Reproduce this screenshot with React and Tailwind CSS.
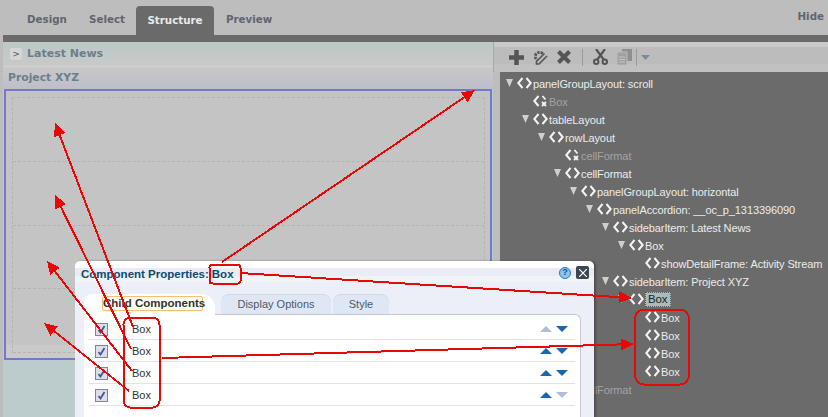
const tree = [
  { level: 0, label: "panelGroupLayout: scroll", open: true },
  { level: 1, label: "Box", off: true },
  { level: 1, label: "tableLayout", open: true },
  { level: 2, label: "rowLayout", open: true },
  { level: 3, label: "cellFormat", off: true },
  { level: 3, label: "cellFormat", open: true },
  { level: 4, label: "panelGroupLayout: horizontal", open: true },
  { level: 5, label: "panelAccordion: __oc_p_1313396090", open: true },
  { level: 6, label: "sidebarItem: Latest News", open: true },
  { level: 7, label: "Box", open: true },
  { level: 8, label: "showDetailFrame: Activity Stream" },
  { level: 6, label: "sidebarItem: Project XYZ", open: true },
  { level: 7, label: "Box", open: true, selected: true },
  { level: 8, label: "Box" },
  { level: 8, label: "Box" },
  { level: 8, label: "Box" },
  { level: 8, label: "Box" },
  { level: 3, label: "cellFormat", off: true },
];

function CodeIcon({ off }) {
  return (
    <svg width="15" height="12" viewBox="0 0 15 12" className="shrink-0 -mt-[2px]">
      <path d="M5.500 1 1.300 6l4.200 5" fill="none" stroke="#f4f4f4" strokeWidth="2" />
      {off ? (
        <path d="M9 7l4 4M13 7l-4 4M9.500 1l3 3.500" fill="none" stroke="#f4f4f4" strokeWidth="1.800" />
      ) : (
        <path d="M9.500 1l4.200 5-4.200 5" fill="none" stroke="#f4f4f4" strokeWidth="2" />
      )}
    </svg>
  );
}

function TreeRow({ item }) {
  const left = 6 + item.level * 16;
  return (
    <div className="flex h-[18px] items-center" style={{ paddingLeft: left }}>
      <span className="flex w-[11px] shrink-0 items-center">
        {item.open && (
          <svg width="7" height="8" viewBox="0 0 7 8" className="-mt-[2px]">
            <path d="M0 0h7L3.500 8z" fill="#cfcfcf" />
          </svg>
        )}
      </span>
      <CodeIcon off={item.off} />
      {item.selected ? (
        <span className="-mt-[1px] ml-[1px] border border-dotted border-[#556] bg-[#a9bcbc] px-[2px] text-[11.500px] leading-[13px] text-[#222]">{item.label}</span>
      ) : (
        <span className={item.off ? "ml-[1px] whitespace-nowrap text-[#a3a3a3]" : "ml-[1px] whitespace-nowrap text-[#ececec]"}>{item.label}</span>
      )}
    </div>
  );
}

function Toolbar() {
  return (
    <div className="flex h-[30px] items-center border-l border-[#a8a8a8] bg-[linear-gradient(#c9c9c9_0_5px,#bcbcbc_5px_22px,#c1c1c1_22px)] pl-[15px]">
      <svg width="15" height="15" viewBox="0 0 15 15"><path d="M7.500 0v15M0 7.500h15" stroke="#555" strokeWidth="4.500" /></svg>
      <svg className="ml-[9px]" width="15" height="15" viewBox="0 0 15 15">
        <circle cx="6.500" cy="6.500" r="4.200" fill="none" stroke="#555" strokeWidth="2.800" strokeDasharray="2.400 1" />
        <path d="M14 6 6 14H3.500v-2.500L11.500 3.500" fill="#bcbcbc" stroke="#555" strokeWidth="1.600" />
      </svg>
      <svg className="ml-[9px]" width="14" height="14" viewBox="0 0 14 14"><path d="M1.500 1.500l11 11M12.500 1.500l-11 11" stroke="#555" strokeWidth="4" /></svg>
      <span className="ml-[11px] h-[17px] w-px bg-[#9a9a9a]" />
      <svg className="ml-[10px]" width="15" height="16" viewBox="0 0 15 16">
        <path d="M3 0l8 11M12 0 4 11" stroke="#555" strokeWidth="2.200" />
        <circle cx="3.200" cy="12.800" r="2.200" fill="none" stroke="#555" strokeWidth="2" />
        <circle cx="11.800" cy="12.800" r="2.200" fill="none" stroke="#555" strokeWidth="2" />
      </svg>
      <svg className="ml-[9px]" width="15" height="16" viewBox="0 0 15 16">
        <path d="M5 0h10v12H5z" fill="#8f8f8f" />
        <path d="M0 3h10v13H0z" fill="#a0a0a0" stroke="#bdbdbd" />
        <path d="M2 8h6M2 10.500h6M2 13h6" stroke="#c5c5c5" />
      </svg>
      <span className="ml-[4px] h-[17px] w-px bg-[#9a9a9a]" />
      <svg className="ml-[4px]" width="9" height="5" viewBox="0 0 9 5"><path d="M0 0h9L4.500 5z" fill="#7d8a9c" /></svg>
    </div>
  );
}

function Check() {
  return (
    <span className="flex h-[13px] w-[13px] items-center justify-center border border-[#85858f] bg-[#dcdee8]">
      <svg width="9" height="9" viewBox="0 0 9 9"><path d="M1.500 5l2 2.500L7.500 1" fill="none" stroke="#43569c" strokeWidth="1.800" /></svg>
    </span>
  );
}

function Move({ up, down }) {
  return (
    <div className="flex gap-[4px]">
      <svg width="12" height="6" viewBox="0 0 12 6"><path d="M0 6 6 0l6 6z" fill={up ? "#1a66b0" : "#b0bdd4"} /></svg>
      <svg width="12" height="6" viewBox="0 0 12 6"><path d="M0 0h12L6 6z" fill={down ? "#1a66b0" : "#b0bdd4"} /></svg>
    </div>
  );
}

function Dialog() {
  const rows = [[false, true], [true, true], [true, true], [true, false]];
  return (
    <div className="absolute left-[75px] top-[261px] h-[170px] w-[519px] rounded-t-[5px] bg-white shadow-[2px_0_2px_rgba(60,60,60,0.6)]">
      <div className="mt-[7px] flex h-[14px] items-center bg-[linear-gradient(#e9ebf5_0_8px,#eff5f5_8px)] pl-[6px] text-[11.500px] font-bold text-[#0f4a70]">
        Component Properties: <span className="ml-[3px]">Box</span>
        <span className="-mt-[5px] ml-auto mr-[5px] flex items-center gap-[5px]">
          <span className="flex h-[12px] w-[12px] items-center justify-center rounded-full border border-[#2a78c0] bg-[#8fc4ee] text-[9px] leading-none text-[#14508e]">?</span>
          <span className="flex h-[13px] w-[13px] items-center justify-center rounded-[2px] bg-[#3d4754]">
            <svg width="8" height="8" viewBox="0 0 8 8"><path d="M0 0l8 8M8 0 0 8" stroke="#fff" strokeWidth="1.200" /></svg>
          </span>
        </span>
      </div>
      <div className="h-[148px] bg-[#edeff8] pl-[9px] pr-[13px] pt-[12px]">
        <div className="flex h-[20px] items-start text-[11px]">
          <div className="relative h-[21px] w-[131px] rounded-tl-[8px] rounded-tr-[14px] bg-white pl-[18px] pt-[2px]">
            <span className="block w-[101px] whitespace-nowrap rounded-[2px] border border-[#f2c36c] bg-[#fffdf4] text-center text-[11.500px] leading-[13px] font-bold text-[#333]">Child Components</span>
          </div>
          <div className="ml-[6px] flex h-[20px] w-[110px] items-center justify-center rounded-t-[8px] border-t border-[#cfd9e8] bg-[#dfe7f4] text-[#4c5a68]">Display Options</div>
          <div className="ml-[2px] flex h-[20px] w-[56px] items-center justify-center rounded-t-[8px] border-t border-[#cfd9e8] bg-[#dfe7f4] text-[#4c5a68]">Style</div>
        </div>
        <div className="h-[110px] rounded-tr-[6px] border-r border-t border-[#c5c8d2] bg-white pl-[5px] pr-[5px] pt-[3px]">
          {rows.map((r, i) => (
            <div key={i} className="flex h-[22px] items-center border-b border-[#e3e3e3] pl-[6px] pr-[7px] pt-px text-[11px] text-[#333]">
              <Check />
              <span className="ml-[24px]">Box</span>
              <span className="ml-auto"><Move up={r[0]} down={r[1]} /></span>
            </div>
          ))}
        </div>
      </div>
    </div>
  );
}

function Arrow({ x1, y1, x2, y2, w = 2 }) {
  const a = Math.atan2(y2 - y1, x2 - x1);
  const len = 13;
  const hw = 6;
  const bx = x2 - Math.cos(a) * len;
  const by = y2 - Math.sin(a) * len;
  const px = -Math.sin(a) * hw;
  const py = Math.cos(a) * hw;
  return (
    <g>
      <line x1={x1} y1={y1} x2={bx} y2={by} stroke="#e80808" strokeWidth={w} />
      <polygon points={`${x2},${y2} ${bx + px},${by + py} ${bx - px},${by - py}`} fill="#e80808" />
    </g>
  );
}

function Annotations() {
  return (
    <svg className="absolute left-0 top-0" width="828" height="417" viewBox="0 0 828 417" shapeRendering="crispEdges">
      <rect x="209.500" y="264.500" width="31" height="19" rx="3" fill="none" stroke="#e80808" strokeWidth="2" />
      <rect x="123.500" y="317.500" width="36" height="90" rx="7" fill="none" stroke="#e80808" strokeWidth="2" />
      <rect x="635" y="309.500" width="54" height="75" rx="9" fill="none" stroke="#e80808" strokeWidth="2" />
      <Arrow x1={222} y1={262} x2={475} y2={90} />
      <Arrow x1={240} y1={273} x2={632} y2={298} />
      <Arrow x1={162} y1={358} x2={634} y2={344} />
      <Arrow x1={133} y1={327} x2={55} y2={123} />
      <Arrow x1={131} y1={349} x2={55} y2={195} />
      <Arrow x1={132} y1={371} x2={47} y2={261} />
      <Arrow x1={129} y1={391} x2={44} y2={323} />
    </svg>
  );
}

export default function App() {
  return (
    <div className="relative flex h-[417px] w-[828px] flex-col overflow-hidden bg-[#bdbdbd] font-['Liberation_Sans',sans-serif]">
      <div className="flex h-[35px] items-end pl-[27px] pr-[4px] font-['DejaVu_Sans',sans-serif] text-[10.300px] font-bold text-[#5f6670]">
        <span className="mb-[8px] w-[62px]">Design</span>
        <span className="mb-[8px] w-[47px]">Select</span>
        <span className="flex h-[29px] w-[78px] items-center justify-center rounded-t-[4px] bg-[#6a6a6a] text-[#e8eaec]">Structure</span>
        <span className="mb-[8px] ml-[12px]">Preview</span>
        <span className="mb-[11px] ml-auto">Hide</span>
      </div>
      <div className="ml-[3px] h-[7px] bg-[#6a6a6a]" />
      <div className="flex min-h-0 flex-1">
        <div className="ml-[3px] flex w-[490px] shrink-0 flex-col bg-[#bccccc]">
          <div className="flex h-[24px] items-center bg-gradient-to-b from-[#bcc8c8] to-[#c9c9c9] pl-[7px] font-['DejaVu_Sans',sans-serif] text-[11px] font-bold text-[#6c7f88]">
            <span className="mr-[5px] flex h-[12px] w-[12px] items-center justify-center rounded-[2px] bg-[#d6d6d6] text-[9px] font-normal leading-none text-[#555]">&gt;</span>
            Latest News
          </div>
          <div className="flex h-[23px] items-center border-t border-[#d2d2d2] bg-gradient-to-b from-[#c8c8c8] to-[#bdbeca] pl-[5px] font-['DejaVu_Sans',sans-serif] text-[10.800px] font-bold text-[#6c7f88]">
            Project XYZ
          </div>
          <div className="ml-[1px] mr-[1px] flex h-[271px] flex-col border-2 border-[#7676cc] bg-[linear-gradient(#c4c4c4_254px,#cacaca_254px)] pl-[6px] pr-[5px] pt-[6px]">
            <div className="flex h-[256px] flex-col border-l border-r border-t border-dashed border-[#b4b4b4]">
              {[0, 1, 2, 3].map((i) => (
                <div key={i} className="h-[64px] border-b border-dashed border-[#b4b4b4]" />
              ))}
            </div>
          </div>
        </div>
        <div className="flex min-w-0 flex-1 flex-col overflow-hidden">
          <Toolbar />
          <div className="ml-[7px] min-h-0 flex-1 bg-[#6b6b6b] pt-[3px] text-[11px] tracking-[-0.1px]">
            {tree.map((item, i) => (
              <TreeRow key={i} item={item} />
            ))}
          </div>
        </div>
      </div>
      <Dialog />
      <Annotations />
    </div>
  );
}
